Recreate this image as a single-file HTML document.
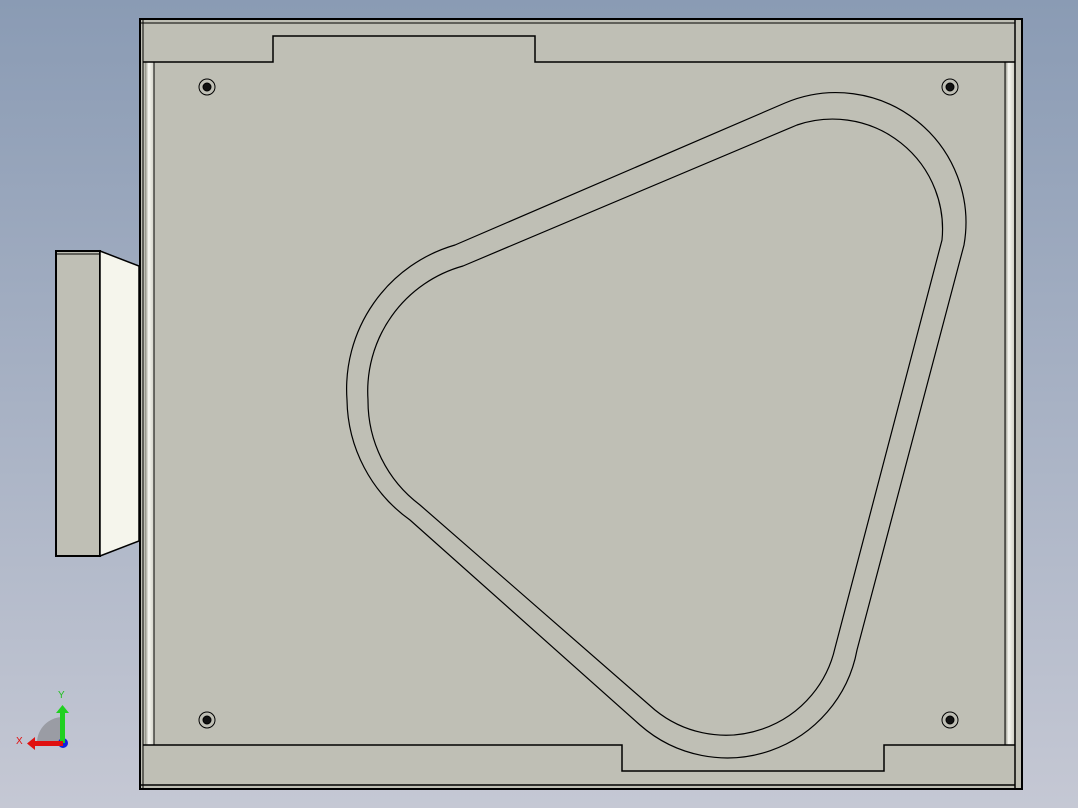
<!DOCTYPE html>
<html><head><meta charset="utf-8"><style>
html,body{margin:0;padding:0;width:1078px;height:808px;overflow:hidden;background:linear-gradient(#8a9bb4,#c5c8d4);}
svg{display:block}
</style></head><body>
<svg width="1078" height="808" viewBox="0 0 1078 808" xmlns="http://www.w3.org/2000/svg">
<defs>
<linearGradient id="rail" x1="0" x2="1" y1="0" y2="0">
<stop offset="0" stop-color="#8c8c80"/><stop offset="0.4" stop-color="#f8f8f2"/><stop offset="1" stop-color="#d0d0c6"/>
</linearGradient>
</defs>
<rect x="56" y="251" width="44" height="305" fill="#bfbfb5" stroke="#000" stroke-width="2"/>
<line x1="56" y1="254" x2="100" y2="254" stroke="#000" stroke-width="1"/>
<polygon points="100,251 139,266 139,541 100,556" fill="#f5f5ec" stroke="#000" stroke-width="1.5"/>
<rect x="140" y="19" width="882" height="770" fill="#bfbfb5" stroke="#000" stroke-width="2"/>
<line x1="143" y1="19" x2="143" y2="789" stroke="#000" stroke-width="1"/>
<line x1="140" y1="23" x2="1015" y2="23" stroke="#000" stroke-width="1"/>
<line x1="1015" y1="19" x2="1015" y2="789" stroke="#000" stroke-width="1.5"/>
<line x1="140" y1="785" x2="1015" y2="785" stroke="#000" stroke-width="1.5"/>
<rect x="145" y="62" width="9" height="683" fill="url(#rail)"/>
<rect x="1005" y="62" width="9" height="683" fill="url(#rail)"/>
<line x1="154" y1="62" x2="154" y2="745" stroke="#000" stroke-width="1"/>
<line x1="1005" y1="62" x2="1005" y2="745" stroke="#000" stroke-width="1"/>
<polyline points="143,62 273,62 273,36 535,36 535,62 1015,62" fill="none" stroke="#000" stroke-width="1.5"/>
<polyline points="143,745 622,745 622,771 884,771 884,745 1015,745" fill="none" stroke="#000" stroke-width="1.5"/>
<path d="M455 245 L785 103 A130 130 0 0 1 964 245 L857 650 A132 132 0 0 1 640 725 L410 520 A150 150 0 0 1 347 400 A150 150 0 0 1 455 245 Z" fill="none" stroke="#000" stroke-width="1.2"/>
<path d="M463 266 L797 125 A110 110 0 0 1 942 240 L835 648 A112 112 0 0 1 655 710 L420 505 A130 130 0 0 1 368 400 A130 130 0 0 1 463 266 Z" fill="none" stroke="#000" stroke-width="1.2"/>
<g fill="none" stroke="#000">
<circle cx="207" cy="87" r="8"/><circle cx="207" cy="87" r="4" fill="#111"/>
<circle cx="950" cy="87" r="8"/><circle cx="950" cy="87" r="4" fill="#111"/>
<circle cx="207" cy="720" r="8"/><circle cx="207" cy="720" r="4" fill="#111"/>
<circle cx="950" cy="720" r="8"/><circle cx="950" cy="720" r="4" fill="#111"/>
</g>
<path d="M63 743 L37 743 A26 26 0 0 1 63 717 Z" fill="#9a9ca4"/>
<circle cx="63" cy="743" r="5" fill="#1020e0"/>
<rect x="60" y="711" width="5" height="32" fill="#20d020"/>
<polygon points="56,713 62.5,705 69,713" fill="#20d020"/>
<rect x="34" y="741" width="29" height="5" fill="#e01010"/>
<polygon points="35,737 27,743.5 35,750" fill="#e01010"/>
<text x="58" y="698" font-family="Liberation Sans,sans-serif" font-size="10" fill="#20c020">Y</text>
<text x="16" y="744" font-family="Liberation Sans,sans-serif" font-size="10" fill="#e01010">X</text>
</svg>
</body></html>
